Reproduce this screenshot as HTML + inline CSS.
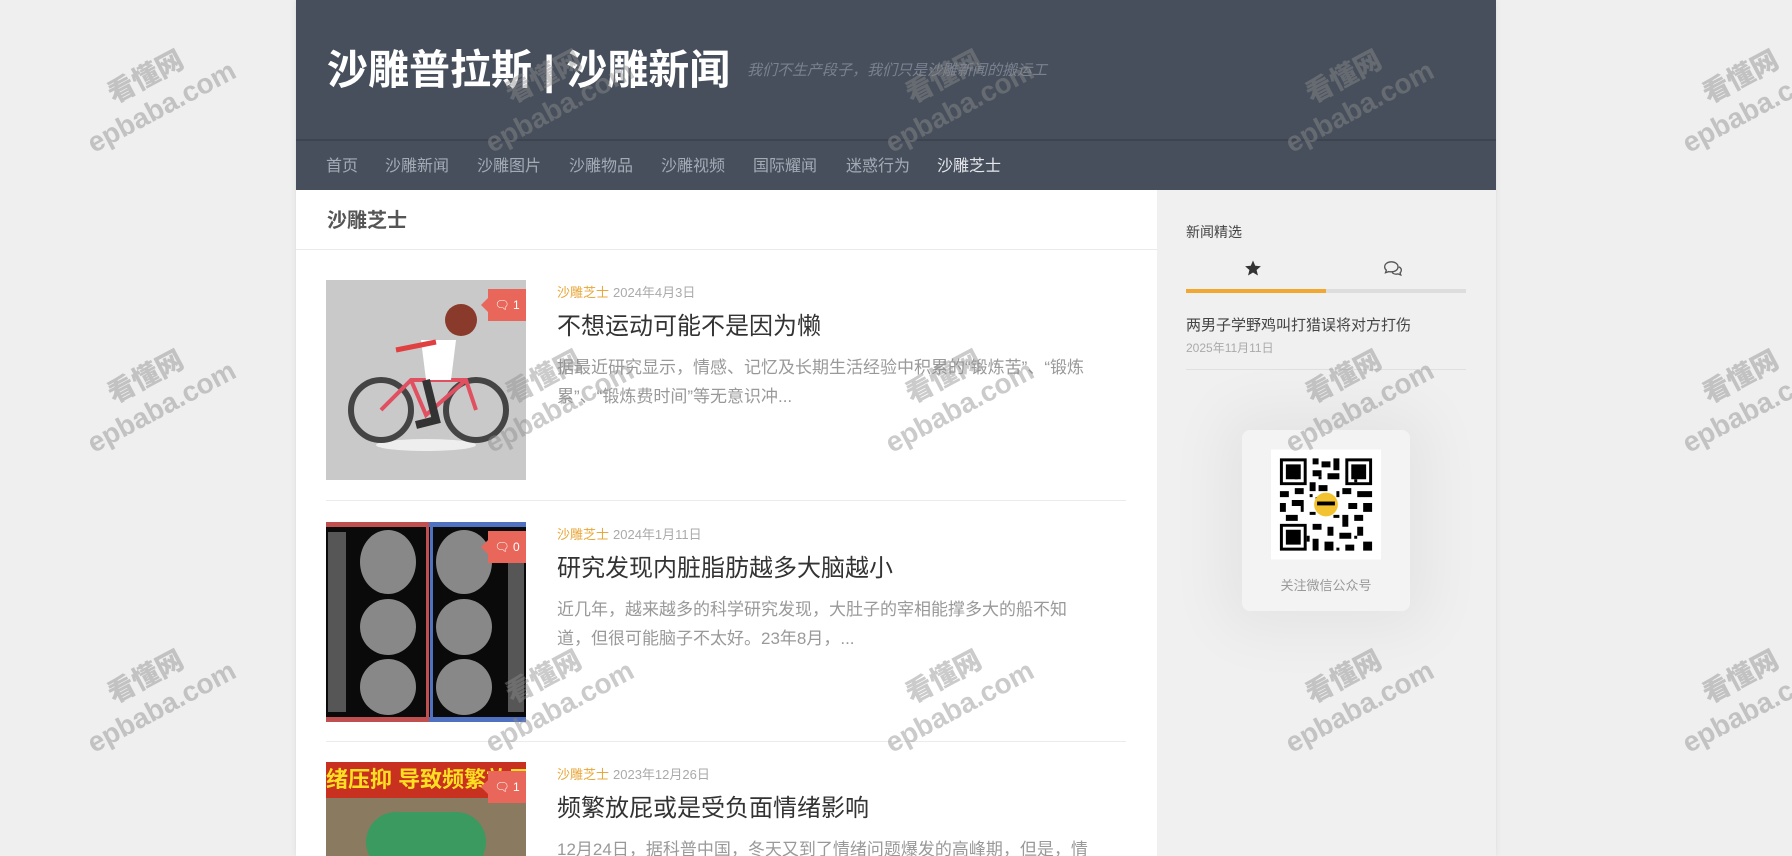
<!DOCTYPE html>
<html style="height:856px;overflow:hidden"><head><meta charset="utf-8"><style>
*{margin:0;padding:0;box-sizing:border-box}
body{width:1792px;height:856px;overflow:hidden;background:#efefef;font-family:"Liberation Sans","Noto Sans CJK SC",sans-serif;position:relative}
.wrap{position:absolute;left:296px;top:0;width:1200px;height:856px;background:#f0f0f0;box-shadow:0 0 6px rgba(0,0,0,.08);overflow:hidden}
.head{position:absolute;left:0;top:0;width:1200px;height:139px;background:#474f5c}
.title{position:absolute;left:31px;top:36px;font-size:41px;font-weight:bold;color:#fff;letter-spacing:0}
.sub{position:absolute;left:451px;top:59px;font-size:15px;font-style:italic;color:#7a8291}
.nav{position:absolute;left:0;top:139px;width:1200px;height:51px;background:#474f5c;border-top:2px solid #3d4450}
.nav span{position:absolute;top:11px;font-size:16px;color:#a3abb7}
.main{position:absolute;left:0;top:190px;width:861px;height:666px;background:#fff;overflow:hidden}
.h{position:absolute;left:31px;top:14px;font-size:20px;color:#555;font-weight:bold}
.hl{position:absolute;left:0;top:59px;width:861px;border-top:1px solid #eaeaea}
.post{position:absolute;left:30px;width:800px;height:200px}
.img{position:absolute;left:0;top:0;width:200px;height:200px;overflow:hidden}
.badge{position:absolute;right:0;top:9px;width:38px;height:32px;background:#e8675a;color:#fff;font-size:12px;line-height:32px;text-align:center}
.badge:before{content:"";position:absolute;left:-7px;top:9px;border:7px solid transparent;border-left:0;border-right-color:#e8675a}
.cat{position:absolute;left:231px;top:2px;font-size:13px;color:#e8a73a}
.cat i{font-style:normal;color:#aaa;margin-left:4px}
.pt{position:absolute;left:231px;top:26px;font-size:24px;color:#333}
.ex{position:absolute;left:231px;top:73px;width:530px;font-size:17px;line-height:29px;color:#999}
.div{position:absolute;left:30px;width:800px;border-top:1px solid #ebebeb}
.side{position:absolute;left:861px;top:190px;width:339px;height:666px;background:#f0f0f0}
.wmw{position:absolute;left:0;top:0;width:1792px;height:856px;overflow:hidden;pointer-events:none}
.wm{position:absolute;color:rgba(140,140,140,.45);font-weight:bold;transform:rotate(-28deg);text-align:center;line-height:34px}
.wm b{display:block;font-size:27px}.wm em{display:block;font-style:normal;font-size:28px;font-family:"Liberation Sans",sans-serif}
</style></head><body>
<div class="wrap">
<div class="head"><div class="title">沙雕普拉斯 | 沙雕新闻</div><div class="sub">我们不生产段子，我们只是沙雕新闻的搬运工</div></div>
<div class="nav"><span style="left:30px">首页</span><span style="left:89px">沙雕新闻</span><span style="left:181px">沙雕图片</span><span style="left:273px">沙雕物品</span><span style="left:365px">沙雕视频</span><span style="left:457px">国际耀闻</span><span style="left:550px">迷惑行为</span><span style="left:641px;color:#e4e7eb">沙雕芝士</span></div>
<div class="main">
<div class="h">沙雕芝士</div><div class="hl"></div>
<div class="post" style="top:90px">
<div class="img" style="background:#c9c9c9"><svg width="200" height="200"><ellipse cx="100" cy="165" rx="50" ry="6" fill="#eee"/><circle cx="55" cy="130" r="30" fill="none" stroke="#444" stroke-width="6"/><circle cx="150" cy="130" r="30" fill="none" stroke="#444" stroke-width="6"/><path d="M55 130 L85 100 L140 100 L150 130 M85 100 L100 135 L140 100" stroke="#e05060" stroke-width="4" fill="none"/><circle cx="135" cy="40" r="16" fill="#8a3a2a"/><path d="M95 60 L130 60 L125 100 L100 100Z" fill="#fff"/><path d="M70 70 L110 62" stroke="#e04040" stroke-width="5"/><path d="M100 100 L110 140 L90 145" stroke="#333" stroke-width="8" fill="none"/></svg><div class="badge">🗨 1</div></div>
<div class="cat">沙雕芝士<i>2024年4月3日</i></div>
<div class="pt">不想运动可能不是因为懒</div>
<div class="ex">据最近研究显示，情感、记忆及长期生活经验中积累的“锻炼苦”、“锻炼累”、“锻炼费时间”等无意识冲...</div>
</div>
<div class="div" style="top:310px"></div>
<div class="post" style="top:332px">
<div class="img" style="background:#0a0a0a"><svg width="200" height="200"><rect x="0" y="0" width="200" height="5" fill="#c05050"/><rect x="0" y="195" width="200" height="5" fill="#c05050"/><rect x="103" y="0" width="97" height="5" fill="#5070c0"/><rect x="103" y="195" width="97" height="5" fill="#5070c0"/><rect x="100" y="5" width="3" height="190" fill="#c05050"/><rect x="104" y="5" width="3" height="190" fill="#5070c0"/><g fill="#888"><ellipse cx="62" cy="40" rx="28" ry="32"/><ellipse cx="138" cy="40" rx="28" ry="32"/><ellipse cx="62" cy="105" rx="28" ry="28"/><ellipse cx="138" cy="105" rx="28" ry="28"/><ellipse cx="62" cy="165" rx="28" ry="28"/><ellipse cx="138" cy="165" rx="28" ry="28"/><rect x="2" y="10" width="18" height="180" opacity=".6"/><rect x="182" y="10" width="16" height="180" opacity=".6"/></g></svg><div class="badge">🗨 0</div></div>
<div class="cat">沙雕芝士<i>2024年1月11日</i></div>
<div class="pt">研究发现内脏脂肪越多大脑越小</div>
<div class="ex">近几年，越来越多的科学研究发现，大肚子的宰相能撑多大的船不知道，但很可能脑子不太好。23年8月，...</div>
</div>
<div class="div" style="top:551px"></div>
<div class="post" style="top:572px">
<div class="img" style="background:#8a7a60"><div style="position:absolute;left:0;top:0;width:200px;height:36px;background:#c83020;color:#ffe020;font-size:22px;font-weight:bold;line-height:36px;white-space:nowrap;overflow:hidden">绪压抑 导致频繁放屁</div><div style="position:absolute;left:40px;top:50px;width:120px;height:60px;background:#3a9a60;border-radius:30px"></div><div class="badge">🗨 1</div></div>
<div class="cat">沙雕芝士<i>2023年12月26日</i></div>
<div class="pt">频繁放屁或是受负面情绪影响</div>
<div class="ex" style="width:570px">12月24日，据科普中国，冬天又到了情绪问题爆发的高峰期，但是，情</div>
</div>
</div>
<div class="side">
<div style="position:absolute;left:29px;top:32px;font-size:14px;color:#444">新闻精选</div>
<svg style="position:absolute;left:87px;top:69px" width="18" height="18" viewBox="0 0 24 24"><path d="M12 2l3 7 7.5.6-5.7 5 1.8 7.4L12 18l-6.6 4 1.8-7.4-5.7-5L9 9z" fill="#333"/></svg>
<svg style="position:absolute;left:226px;top:70px" width="20" height="17" viewBox="0 0 24 20"><path d="M2 8c0-3.5 3.5-6 8-6s8 2.5 8 6-3.5 6-8 6c-1 0-2 0-3-.3L3 15l1-3C2.8 11 2 9.6 2 8z M19 8c2 .8 3 2.3 3 4 0 1.3-.6 2.4-1.5 3.2l.8 2.6-3.2-1.3c-.7.2-1.4.3-2.1.3-2.2 0-4-.8-5-2" fill="none" stroke="#555" stroke-width="1.6"/></svg>
<div style="position:absolute;left:29px;top:99px;width:280px;height:4px;background:#ddd"></div>
<div style="position:absolute;left:29px;top:99px;width:140px;height:4px;background:#f0a830"></div>
<div style="position:absolute;left:29px;top:124px;font-size:15px;color:#444">两男子学野鸡叫打猎误将对方打伤</div>
<div style="position:absolute;left:29px;top:149px;font-size:12px;color:#aaa">2025年11月11日</div>
<div style="position:absolute;left:29px;top:179px;width:280px;border-top:1px solid #e0e0e0"></div>
<div style="position:absolute;left:85px;top:240px;width:168px;height:181px;background:#f3f3f3;border-radius:8px;box-shadow:0 0 60px 20px rgba(0,0,0,.05)">
<svg style="position:absolute;left:29px;top:19px" width="110" height="111" viewBox="0 0 37 37"><rect width="37" height="37" fill="#fff"/><g fill="#000"><path d="M3 3h9v9H3zM25 3h9v9h-9zM3 25h9v9H3z"/></g><g fill="#fff"><path d="M4 4h7v7H4zM26 4h7v7h-7zM4 26h7v7H4z"/></g><g fill="#000"><path d="M5 5h5v5H5zM27 5h5v5h-5zM5 27h5v5H5z"/><path d="M14 3h2v2h-2zM17 4h3v2h-3zM21 3h2v4h-2zM14 7h3v2h-3zM19 8h4v2h-4zM13 11h2v3h-2zM3 14h3v2H3zM8 13h3v2H8zM16 12h3v2h-3zM24 13h3v2h-3zM29 14h5v2h-5zM3 18h2v3H3zM7 17h4v2H7zM26 18h3v2h-3zM31 18h3v3h-3zM5 22h4v2H5zM24 22h2v4h-2zM28 22h3v2h-3zM14 25h3v2h-3zM19 26h2v3h-2zM23 28h4v2h-4zM29 26h2v3h-2zM14 30h2v4h-2zM18 31h3v3h-3zM25 32h3v2h-3zM31 31h3v3h-3z"/><path d="M13 15h1v1h-1zM15 16h1v1h-1zM22 14h1v2h-1zM13 21h2v1h-2zM21 22h2v1h-2zM8 9h1v1H8zM16 9h1v1h-1zM10 19h1v2h-1zM28 10h1v1h-1zM12 29h1v2h-1zM22 33h1v1h-1zM28 29h1v1h-1z"/></g><circle cx="18.5" cy="18.5" r="4" fill="#f2c230"/><rect x="15.5" y="17.5" width="6" height="1.3" fill="#000"/></svg>
<div style="position:absolute;left:0;top:145px;width:168px;text-align:center;font-size:13px;color:#999">关注微信公众号</div>
</div>
</div>
</div>
<div class="wmw">
<div class="wm" style="left:72px;top:58px"><b>看懂网</b><em>epbaba.com</em></div>
<div class="wm" style="left:470px;top:58px"><b>看懂网</b><em>epbaba.com</em></div>
<div class="wm" style="left:870px;top:58px"><b>看懂网</b><em>epbaba.com</em></div>
<div class="wm" style="left:1270px;top:58px"><b>看懂网</b><em>epbaba.com</em></div>
<div class="wm" style="left:1667px;top:58px"><b>看懂网</b><em>epbaba.com</em></div>
<div class="wm" style="left:72px;top:358px"><b>看懂网</b><em>epbaba.com</em></div>
<div class="wm" style="left:470px;top:358px"><b>看懂网</b><em>epbaba.com</em></div>
<div class="wm" style="left:870px;top:358px"><b>看懂网</b><em>epbaba.com</em></div>
<div class="wm" style="left:1270px;top:358px"><b>看懂网</b><em>epbaba.com</em></div>
<div class="wm" style="left:1667px;top:358px"><b>看懂网</b><em>epbaba.com</em></div>
<div class="wm" style="left:72px;top:658px"><b>看懂网</b><em>epbaba.com</em></div>
<div class="wm" style="left:470px;top:658px"><b>看懂网</b><em>epbaba.com</em></div>
<div class="wm" style="left:870px;top:658px"><b>看懂网</b><em>epbaba.com</em></div>
<div class="wm" style="left:1270px;top:658px"><b>看懂网</b><em>epbaba.com</em></div>
<div class="wm" style="left:1667px;top:658px"><b>看懂网</b><em>epbaba.com</em></div>
</div>
</body></html>
